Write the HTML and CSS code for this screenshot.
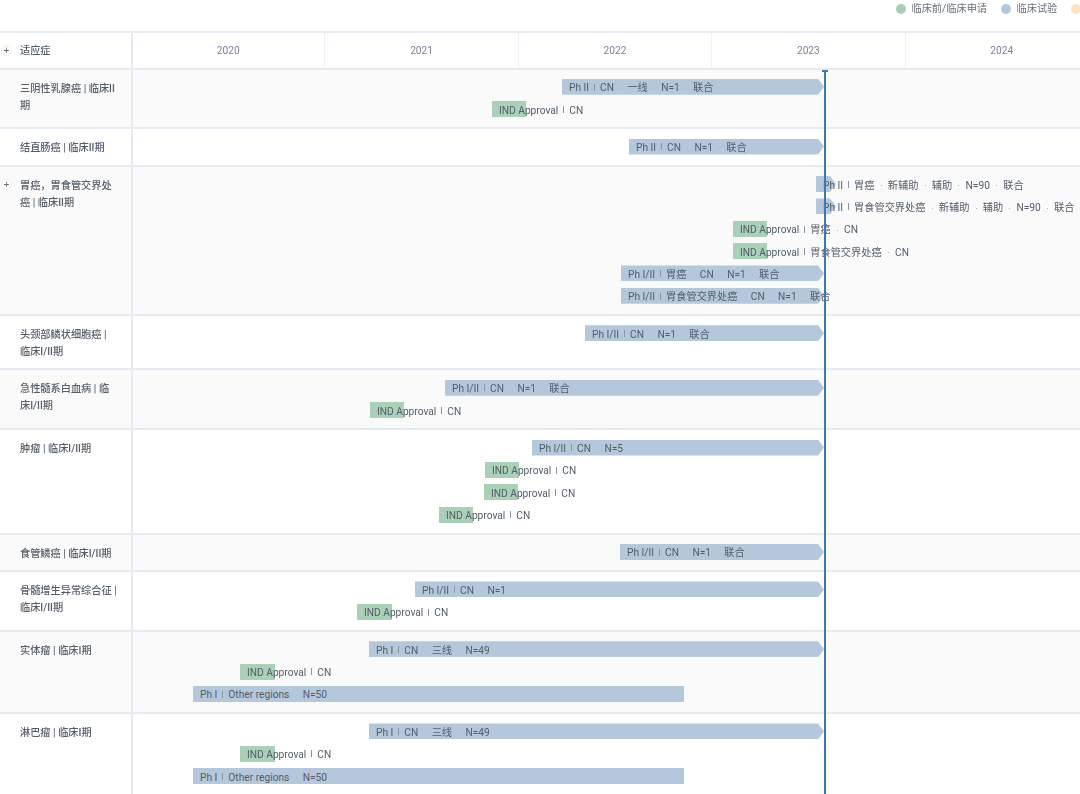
FILE: index.html
```html
<!DOCTYPE html>
<html lang="zh">
<head>
<meta charset="utf-8">
<title>适应症时间线</title>
<link rel="stylesheet" href="styles.css">
</head>
<body>
<div class="page">
  <div class="legend">
    <span class="legend-item"><i class="swatch swatch-green"></i>临床前/临床申请</span>
    <span class="legend-item"><i class="swatch swatch-blue"></i>临床试验</span>
    <span class="legend-item"><i class="swatch swatch-peach"></i></span>
  </div>
  <div class="head">
    <div class="label head-label"><span class="plus">+</span>适应症</div>
    <div class="years">
      <div class="year">2020</div><div class="year">2021</div><div class="year">2022</div><div class="year">2023</div><div class="year">2024</div>
    </div>
  </div>
  <div class="body">
    <div class="today"></div>

    <div class="row alt">
      <div class="label">三阴性乳腺癌 | 临床II期</div>
      <div class="track">
        <div class="lane"><div class="bar trial arrow" style="margin-left:429px;width:262px"><b>Ph II</b><u></u><b>CN</b><s></s><b>一线</b><s></s><b>N=1</b><s></s><b>联合</b></div></div>
        <div class="lane"><div class="bar ind" style="margin-left:359px;width:34px"><b>IND Approval</b><u></u><b>CN</b></div></div>
      </div>
    </div>

    <div class="row">
      <div class="label">结直肠癌 | 临床II期</div>
      <div class="track">
        <div class="lane"><div class="bar trial arrow" style="margin-left:496px;width:195px"><b>Ph II</b><u></u><b>CN</b><s></s><b>N=1</b><s></s><b>联合</b></div></div>
      </div>
    </div>

    <div class="row alt">
      <div class="label"><span class="plus">+</span>胃癌，胃食管交界处癌 | 临床II期</div>
      <div class="track">
        <div class="lane"><div class="bar trial arrow" style="margin-left:683px;width:20px"><b>Ph II</b><u></u><b>胃癌</b><s></s><b>新辅助</b><s></s><b>辅助</b><s></s><b>N=90</b><s></s><b>联合</b></div></div>
        <div class="lane"><div class="bar trial arrow" style="margin-left:683px;width:20px"><b>Ph II</b><u></u><b>胃食管交界处癌</b><s></s><b>新辅助</b><s></s><b>辅助</b><s></s><b>N=90</b><s></s><b>联合</b></div></div>
        <div class="lane"><div class="bar ind" style="margin-left:600px;width:34px"><b>IND Approval</b><u></u><b>胃癌</b><s></s><b>CN</b></div></div>
        <div class="lane"><div class="bar ind" style="margin-left:600px;width:34px"><b>IND Approval</b><u></u><b>胃食管交界处癌</b><s></s><b>CN</b></div></div>
        <div class="lane"><div class="bar trial arrow" style="margin-left:488px;width:203px"><b>Ph I/II</b><u></u><b>胃癌</b><s></s><b>CN</b><s></s><b>N=1</b><s></s><b>联合</b></div></div>
        <div class="lane"><div class="bar trial arrow" style="margin-left:488px;width:203px"><b>Ph I/II</b><u></u><b>胃食管交界处癌</b><s></s><b>CN</b><s></s><b>N=1</b><s></s><b>联合</b></div></div>
      </div>
    </div>

    <div class="row">
      <div class="label">头颈部鳞状细胞癌 | 临床I/II期</div>
      <div class="track">
        <div class="lane"><div class="bar trial arrow" style="margin-left:452px;width:239px"><b>Ph I/II</b><u></u><b>CN</b><s></s><b>N=1</b><s></s><b>联合</b></div></div>
      </div>
    </div>

    <div class="row alt">
      <div class="label">急性髓系白血病 | 临床I/II期</div>
      <div class="track">
        <div class="lane"><div class="bar trial arrow" style="margin-left:312px;width:379px"><b>Ph I/II</b><u></u><b>CN</b><s></s><b>N=1</b><s></s><b>联合</b></div></div>
        <div class="lane"><div class="bar ind" style="margin-left:237px;width:34px"><b>IND Approval</b><u></u><b>CN</b></div></div>
      </div>
    </div>

    <div class="row">
      <div class="label">肿瘤 | 临床I/II期</div>
      <div class="track">
        <div class="lane"><div class="bar trial arrow" style="margin-left:399px;width:292px"><b>Ph I/II</b><u></u><b>CN</b><s></s><b>N=5</b></div></div>
        <div class="lane"><div class="bar ind" style="margin-left:352px;width:34px"><b>IND Approval</b><u></u><b>CN</b></div></div>
        <div class="lane"><div class="bar ind" style="margin-left:351px;width:34px"><b>IND Approval</b><u></u><b>CN</b></div></div>
        <div class="lane"><div class="bar ind" style="margin-left:306px;width:34px"><b>IND Approval</b><u></u><b>CN</b></div></div>
      </div>
    </div>

    <div class="row alt">
      <div class="label">食管鳞癌 | 临床I/II期</div>
      <div class="track">
        <div class="lane"><div class="bar trial arrow" style="margin-left:487px;width:204px"><b>Ph I/II</b><u></u><b>CN</b><s></s><b>N=1</b><s></s><b>联合</b></div></div>
      </div>
    </div>

    <div class="row">
      <div class="label">骨髓增生异常综合征 | 临床I/II期</div>
      <div class="track">
        <div class="lane"><div class="bar trial arrow" style="margin-left:282px;width:409px"><b>Ph I/II</b><u></u><b>CN</b><s></s><b>N=1</b></div></div>
        <div class="lane"><div class="bar ind" style="margin-left:224px;width:35px"><b>IND Approval</b><u></u><b>CN</b></div></div>
      </div>
    </div>

    <div class="row alt">
      <div class="label">实体瘤 | 临床I期</div>
      <div class="track">
        <div class="lane"><div class="bar trial arrow" style="margin-left:236px;width:455px"><b>Ph I</b><u></u><b>CN</b><s></s><b>三线</b><s></s><b>N=49</b></div></div>
        <div class="lane"><div class="bar ind" style="margin-left:107px;width:35px"><b>IND Approval</b><u></u><b>CN</b></div></div>
        <div class="lane"><div class="bar trial" style="margin-left:60px;width:491px"><b>Ph I</b><u></u><b>Other regions</b><s></s><b>N=50</b></div></div>
      </div>
    </div>

    <div class="row">
      <div class="label">淋巴瘤 | 临床I期</div>
      <div class="track">
        <div class="lane"><div class="bar trial arrow" style="margin-left:236px;width:455px"><b>Ph I</b><u></u><b>CN</b><s></s><b>三线</b><s></s><b>N=49</b></div></div>
        <div class="lane"><div class="bar ind" style="margin-left:107px;width:35px"><b>IND Approval</b><u></u><b>CN</b></div></div>
        <div class="lane"><div class="bar trial" style="margin-left:60px;width:491px"><b>Ph I</b><u></u><b>Other regions</b><s></s><b>N=50</b></div></div>
      </div>
    </div>
  </div>
</div>
</body>
</html>
```
FILE: styles.css
```css
* { box-sizing: border-box; }
html, body { margin: 0; height: 100%; overflow: hidden; background: #fff; }
body {
  font-family: "Roboto", "Noto Sans CJK SC", sans-serif;
  font-size: 10.2px;
  color: #565e68;
}
.page { width: 1080px; height: 794px; overflow: hidden; filter: blur(0.3px); }

.legend {
  height: 30.5px;
  display: flex;
  gap: 14px;
  padding: 3px 0 0 896px;
  white-space: nowrap;
  line-height: 11px;
  color: #6a717b;
}
.legend-item { display: flex; align-items: center; gap: 5.5px; height: 11px; }
.swatch { width: 10px; height: 10px; border-radius: 50%; flex: none; }
.swatch-green { background: #a9cfb6; }
.swatch-blue { background: #b4c6dc; }
.swatch-peach { background: #fde2c4; }

.head {
  display: flex;
  height: 39px;
  border-top: 2px solid #e5eaf3;
  border-bottom: 2px solid #e5eaf3;
}
.years { flex: 1; display: flex; overflow: hidden; margin-left: -1px; }
.year {
  flex: 0 0 193.4px;
  text-align: center;
  line-height: 35px;
  color: #7d8590;
  border-right: 1px solid #eef1f6;
}

.body { position: relative; height: 725px; overflow: hidden; }
.today {
  position: absolute;
  z-index: 3;
  left: 824px;
  top: 0;
  bottom: 0;
  width: 1.5px;
  background: #3f78ae;
}
.today::before {
  content: "";
  position: absolute;
  left: -2px;
  top: 0;
  width: 5.5px;
  height: 2.5px;
  background: #3f78ae;
}

.row {
  display: flex;
  border-bottom: 2px solid #e5eaf3;
  background: #fff;
}
.row.alt { background: #fafafb; }

.label {
  flex: 0 0 133px;
  width: 133px;
  padding: 10px 13px 8.5px 20px;
  line-height: 17px;
  font-weight: 500;
  color: #565e68;
  border-right: 2px solid #e5eaf3;
  position: relative;
}
.head-label { padding: 9px 0 0 20px; }

.plus {
  position: absolute;
  left: 1px;
  top: 12px;
  width: 11px;
  height: 11px;
  border: 1px solid #eceef2;
  border-radius: 50%;
  background: #fff;
  font: 10px/9px "Liberation Sans", sans-serif;
  text-align: center;
  color: #666;
}

.track { flex: 1; padding: 9.3px 0 3.8px; min-width: 0; }
.lane { height: 22.35px; }

.bar {
  position: relative;
  height: 16px;
  padding: 3.5px 0 0 7px;
  display: flex;
  align-items: center;
  white-space: nowrap;
  color: #535d69;
  line-height: 12.5px;
}
.bar::before {
  content: "";
  position: absolute;
  left: 0;
  top: 0;
  right: 0;
  bottom: 0;
  background: #b5c7db;
}
.bar.ind::before { background: #aad0b7; }
.bar.arrow::before { clip-path: polygon(0 0, calc(100% - 6px) 0, 100% 50%, calc(100% - 6px) 100%, 0 100%); }
.bar b { position: relative; font-weight: 400; flex: none; }
.bar u {
  position: relative;
  flex: none;
  width: 1px;
  height: 7px;
  margin: -3px 5px 0 5px;
  background: #8c95a0;
}
.bar s {
  position: relative;
  flex: none;
  width: 1px;
  height: 1px;
  margin: 0 6.2px;
  background: #aab1ba;
}
```
